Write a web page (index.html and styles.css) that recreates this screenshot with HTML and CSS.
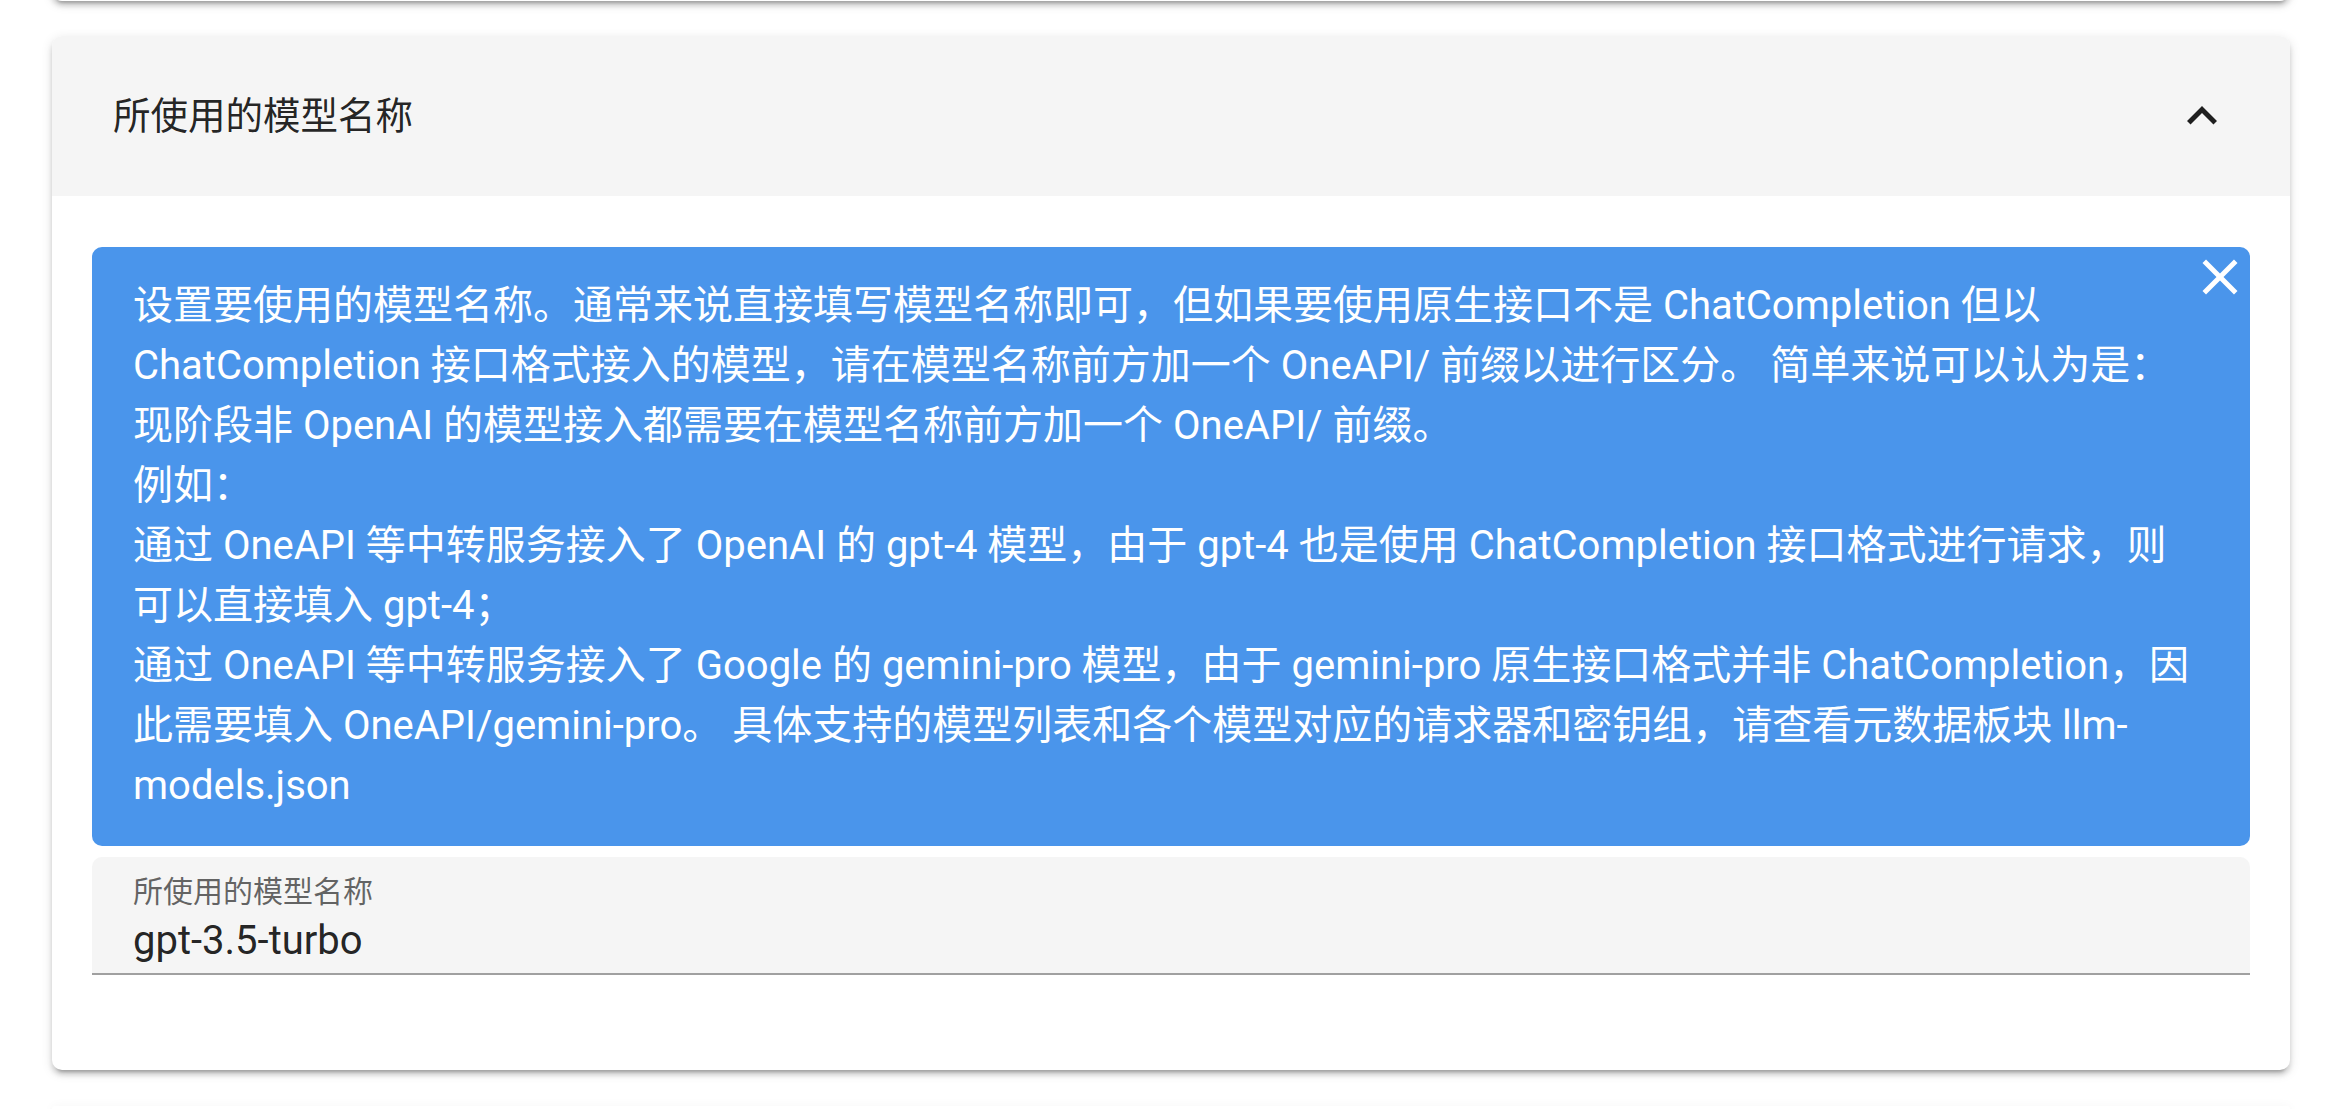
FILE: index.html
```html
<!DOCTYPE html>
<html lang="zh-CN">
<head>
<meta charset="utf-8">
<title>所使用的模型名称</title>
<link rel="stylesheet" href="styles.css">
</head>
<body>
<div class="page">
  <div class="panel panel-prev"></div>

  <section class="panel panel-active">
    <header class="panel-header">
      <span class="panel-title">所使用的模型名称</span>
      <svg class="chevron" viewBox="0 0 24 24" width="60" height="60" aria-hidden="true">
        <path d="M7.41,15.41L12,10.83L16.59,15.41L18,14L12,8L6,14L7.41,15.41Z"/>
      </svg>
    </header>
    <div class="panel-content">
      <div class="alert">
        <p class="alert-text">设置要使用的模型名称。通常来说直接填写模型名称即可，但如果要使用原生接口不是 ChatCompletion 但以<br>ChatCompletion 接口格式接入的模型，请在模型名称前方加一个 OneAPI/ 前缀以进行区分。 简单来说可以认为是：<br>现阶段非 OpenAI 的模型接入都需要在模型名称前方加一个 OneAPI/ 前缀。<br>例如：<br>通过 OneAPI 等中转服务接入了 OpenAI 的 gpt-4 模型，由于 gpt-4 也是使用 ChatCompletion 接口格式进行请求，则<br>可以直接填入 gpt-4；<br>通过 OneAPI 等中转服务接入了 Google 的 gemini-pro 模型，由于 gemini-pro 原生接口格式并非 ChatCompletion，因<br>此需要填入 OneAPI/gemini-pro。 具体支持的模型列表和各个模型对应的请求器和密钥组，请查看元数据板块 llm-<br>models.json</p>
        <button class="alert-close" type="button" aria-label="关闭">
          <svg viewBox="0 0 24 24" width="60" height="60" aria-hidden="true">
            <path d="M19,6.41L17.59,5L12,10.59L6.41,5L5,6.41L10.59,12L5,17.59L6.41,19L12,13.41L17.59,19L19,17.59L13.41,12L19,6.41Z"/>
          </svg>
        </button>
      </div>
      <div class="field">
        <label class="field-label">所使用的模型名称</label>
        <div class="field-value">gpt-3.5-turbo</div>
      </div>
    </div>
  </section>

  <div class="panel panel-next"></div>
</div>
</body>
</html>
```

FILE: styles.css
```css
html, body {
  margin: 0;
  padding: 0;
  background: #ffffff;
}

body {
  font-family: Roboto, "Noto Sans CJK SC", sans-serif;
  color: rgba(0, 0, 0, 0.87);
  overflow: hidden;
}

.page {
  padding: 0 42px 0 52px;
}

.panel {
  background: #ffffff;
  border-radius: 10px;
  box-shadow: 0 7px 3px -5px rgba(0, 0, 0, 0.2),
              0 5px 5px 0 rgba(0, 0, 0, 0.14),
              0 3px 12px 0 rgba(0, 0, 0, 0.12);
}

.panel-prev {
  height: 40px;
  margin-top: -39px;
  border-radius: 0 0 10px 10px;
}

.panel-active {
  margin-top: 35px;
}

.panel-next {
  height: 3px;
  margin-top: 36px;
  border-radius: 10px 10px 0 0;
}

.panel-header {
  height: 160px;
  box-sizing: border-box;
  background: #f5f5f5;
  border-radius: 10px 10px 0 0;
  display: flex;
  align-items: center;
  justify-content: space-between;
  padding: 0 58px 0 61px;
}

.panel-title {
  font-size: 37.5px;
  line-height: 50px;
  color: rgba(0, 0, 0, 0.87);
}

.chevron {
  display: block;
  fill: #1f1f1f;
}

.panel-content {
  padding: 51px 40px 95px;
}

.alert {
  position: relative;
  background: #4a95eb;
  border-radius: 10px;
  padding: 29px 40px 30px 41px;
  color: #ffffff;
}

.alert-text {
  margin: 0;
  font-size: 40px;
  line-height: 60px;
  white-space: nowrap;
}

.alert-close {
  position: absolute;
  top: 0;
  right: 0;
  width: 60px;
  height: 60px;
  padding: 0;
  border: 0;
  background: transparent;
  cursor: pointer;
}

.alert-close svg {
  display: block;
  fill: #ffffff;
}

.field {
  margin-top: 11px;
  background: #f5f5f5;
  border-radius: 10px 10px 0 0;
  border-bottom: 2px solid #a0a0a0;
  padding: 17px 40px 8px 41px;
}

.field-label {
  display: block;
  font-size: 30px;
  line-height: 36px;
  color: rgba(0, 0, 0, 0.6);
}

.field-value {
  margin-top: 7px;
  font-size: 40px;
  line-height: 48px;
  color: rgba(0, 0, 0, 0.87);
}
```
